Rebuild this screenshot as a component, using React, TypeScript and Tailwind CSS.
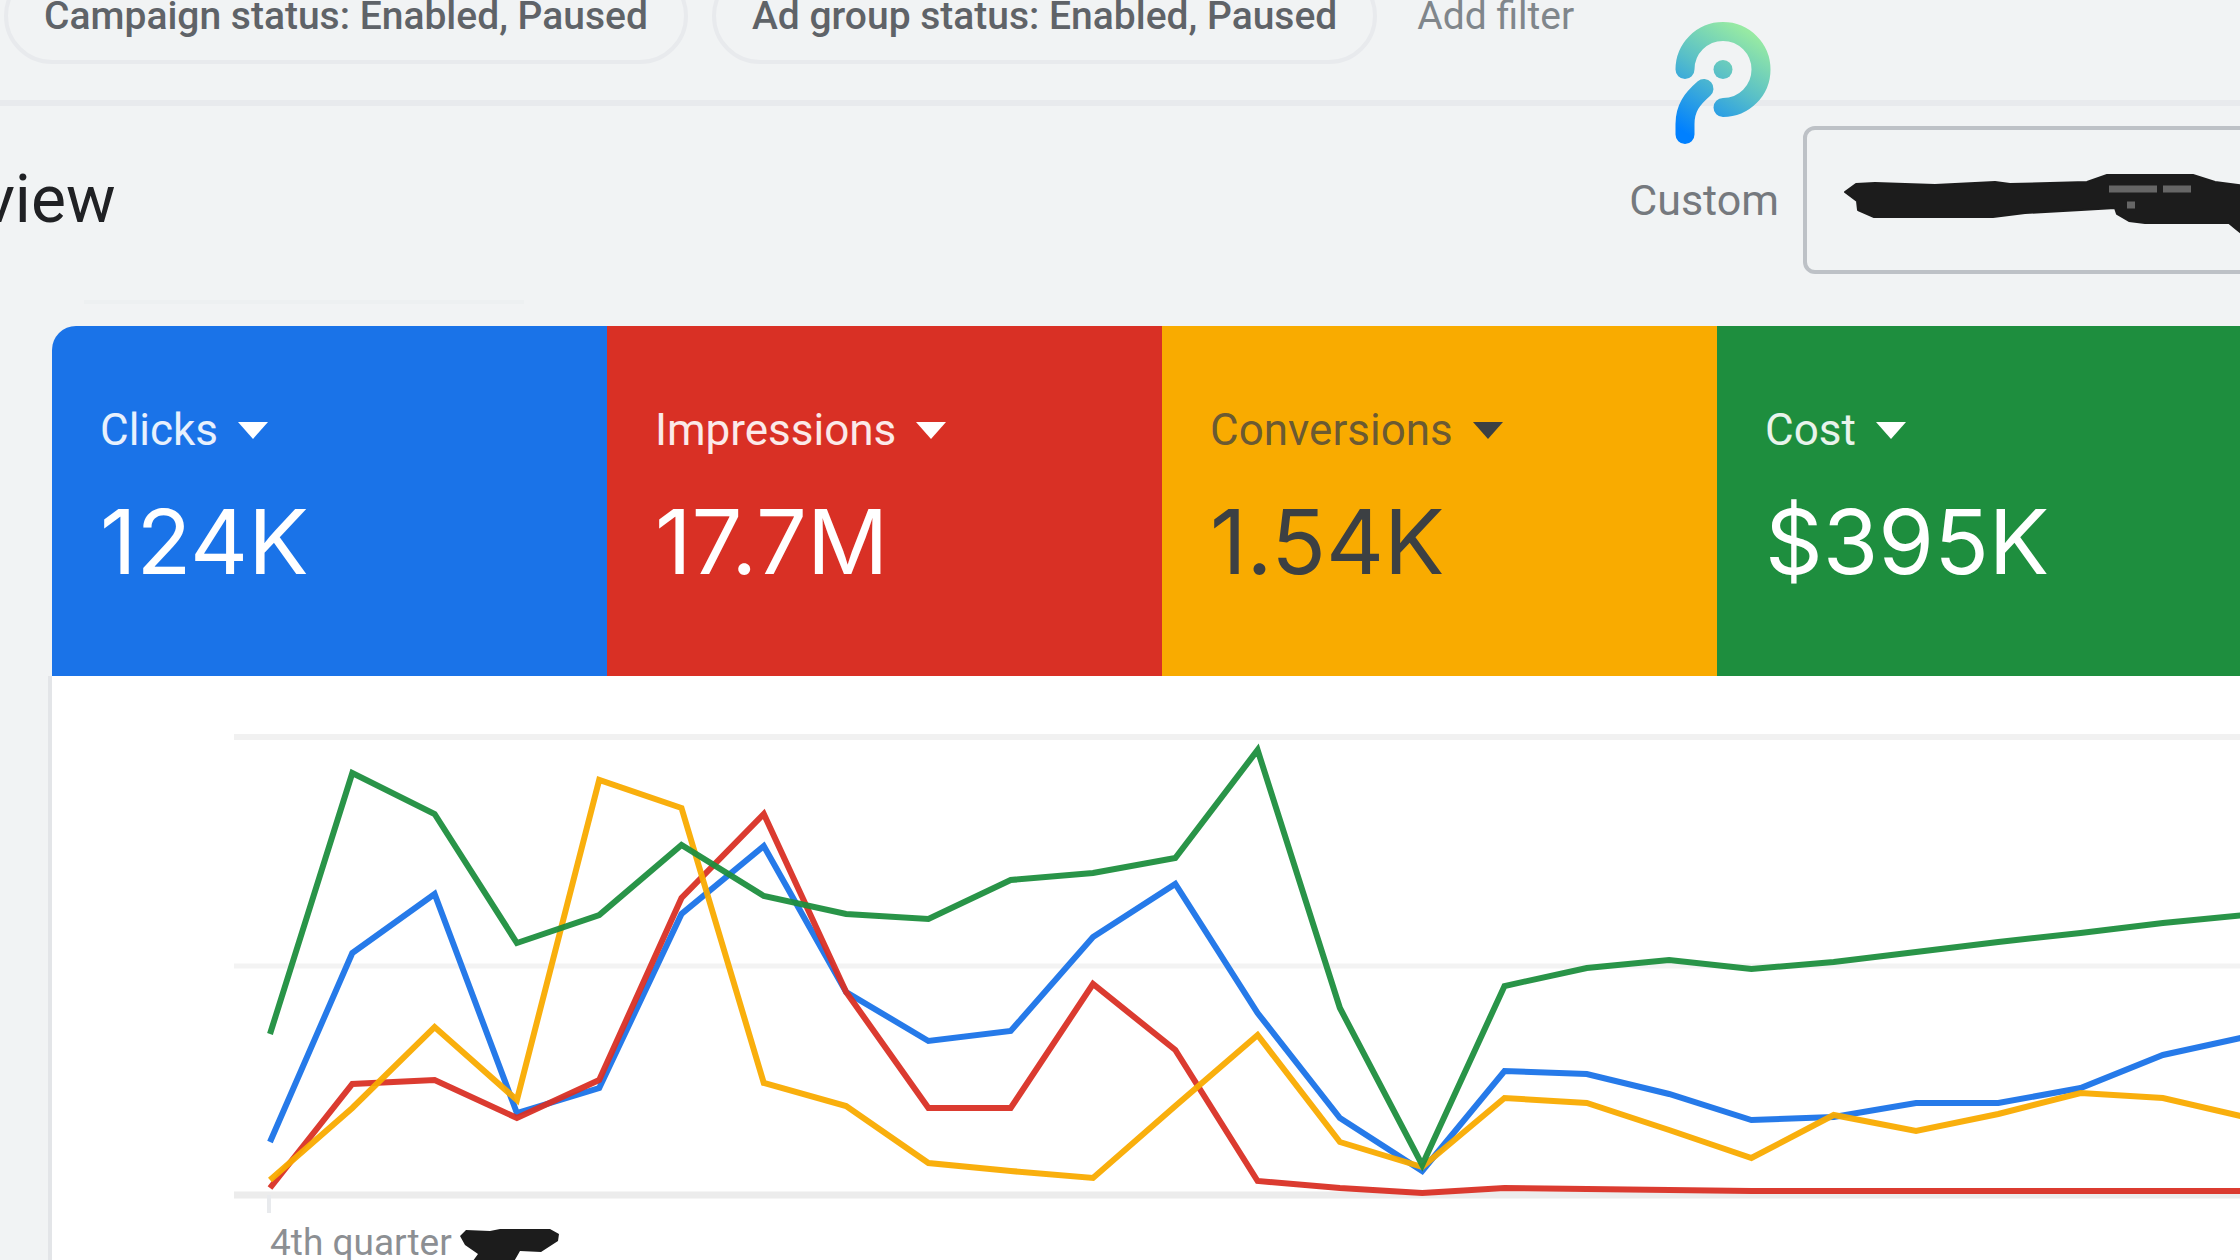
import clsx from 'clsx';

interface Metric {
  label: string;
  value: string;
  tile: string;
  labelColor: string;
}

interface Series {
  name: string;
  color: string;
  values: number[];
}

const FILTERS = ['Campaign status: Enabled, Paused', 'Ad group status: Enabled, Paused'];

const METRICS: Metric[] = [
  { label: 'Clicks', value: '124K', tile: 'bg-[#1a73e8] text-white rounded-tl-3xl', labelColor: 'text-white/90' },
  { label: 'Impressions', value: '17.7M', tile: 'bg-[#d93025] text-white', labelColor: 'text-white/90' },
  { label: 'Conversions', value: '1.54K', tile: 'bg-[#f9ab00] text-[#3c4043]', labelColor: 'text-[#3c4043]/75' },
  { label: 'Cost', value: '$395K', tile: 'bg-[#1e8e3e] text-white', labelColor: 'text-white/90' },
];

// y positions inside the chart's viewBox, one per week
const SERIES: Series[] = [
  {
    name: 'Clicks',
    color: '#1a73e8',
    values: [466, 277, 218, 437, 412, 238, 170, 316, 365, 355, 261, 208, 337, 442, 495, 395, 398, 418, 444, 441, 427, 427, 412, 379, 361],
  },
  {
    name: 'Impressions',
    color: '#d93025',
    values: [512, 408, 404, 442, 404, 222, 138, 316, 432, 432, 308, 374, 505, 512, 517, 512, 513, 514, 515, 515, 515, 515, 515, 515, 515],
  },
  {
    name: 'Conversions',
    color: '#f9ab00',
    values: [504, 432, 351, 424, 104, 132, 407, 430, 487, 495, 502, 430, 359, 466, 491, 422, 427, 454, 482, 439, 455, 438, 417, 422, 441],
  },
  {
    name: 'Cost',
    color: '#1e8e3e',
    values: [358, 97, 138, 267, 239, 169, 220, 238, 243, 204, 197, 182, 74, 332, 489, 310, 292, 284, 293, 286, 276, 266, 257, 247, 239],
  },
];

const START_X = 218;
const STEP_X = 82.3;

const toPoints = (values: number[]) => values.map((y, i) => `${START_X + i * STEP_X},${y}`).join(' ');

function BrandMark() {
  return (
    <svg viewBox="0 0 96 123" className="w-24" fill="none" aria-hidden="true">
      <defs>
        <linearGradient id="brand" gradientUnits="userSpaceOnUse" x1="74" y1="10" x2="12" y2="112">
          <stop offset="0" stopColor="#97eaa3" />
          <stop offset="0.45" stopColor="#58bfc8" />
          <stop offset="1" stopColor="#0080ff" />
        </linearGradient>
      </defs>
      <g stroke="url(#brand)" strokeWidth="19" strokeLinecap="round">
        <path d="M10 47.5A38 38 0 1 1 48 85.5" />
        <path d="M29 66.5C17 77 10 86 10 102V112.5" />
      </g>
      <circle cx="48" cy="47.5" r="9.5" fill="url(#brand)" />
    </svg>
  );
}

function FilterBar() {
  return (
    <div className="-mt-8 flex items-center border-b-6 border-[#e8eaed] pb-9 pl-1 whitespace-nowrap">
      {FILTERS.map((f) => (
        <button
          key={f}
          className="mr-6 h-24 rounded-full border-4 border-[#e8eaed] px-9 text-[39px] font-medium text-[#5f6368]"
        >
          {f}
        </button>
      ))}
      <button className="ml-4 text-[39px] text-[#80868b]">Add filter</button>
    </div>
  );
}

function TitleRow() {
  return (
    <div className="flex items-center justify-between pt-5">
      <h1 className="-ml-38 text-[66px] leading-[80px] text-[#202124]">Overview</h1>
      <div className="flex items-center gap-6">
        <label htmlFor="range" className="text-[43px] text-[#75797e]">
          Custom
        </label>
        <button id="range" className="-mr-8 h-[148px] w-[469px] rounded-xl border-4 border-[#bdc1c6] pl-9">
          {/* Dates are blacked out */}
          <svg viewBox="-2 -12 400 84" className="w-[400px]" aria-hidden="true">
            <path
              d="M0 22L11 14L30 13L90 15L150 12L165 14L242 12L262 5H348L370 12L400 16V66L390 58L384 53H300L284 51L272 44L270 38L236 40L180 43L148 47H29L13 40L12 31Z"
              fill="#1c1c1c"
              stroke="#1c1c1c"
              strokeWidth="2"
              strokeLinejoin="round"
            />
            <path d="M264 19H312M318 19H346M282 35H290" stroke="#666" strokeWidth="7" />
          </svg>
        </button>
      </div>
    </div>
  );
}

function MetricTile({ metric }: { metric: Metric }) {
  return (
    <button className={clsx('flex flex-1 flex-col items-start px-12 pt-20 pb-[82px] text-left', metric.tile)}>
      <span className="flex items-center gap-5">
        <span className={clsx('text-[44px] leading-[48px]', metric.labelColor)}>{metric.label}</span>
        <svg viewBox="0 0 30 17" className="w-[30px]" fill="currentColor" aria-hidden="true">
          <path d="M0 0H30L15 17Z" />
        </svg>
      </span>
      <span className="mt-9 font-[Inter,sans-serif] text-[90px] leading-[104px]">{metric.value}</span>
    </button>
  );
}

function TrendChart() {
  return (
    <div className="-ml-1 border-l-4 border-[#e3e5e8] bg-white">
      <svg viewBox="0 0 2220 545" className="w-full" fill="none" role="img" aria-label="Trend">
        <path d="M182 61H2220" stroke="#f1f1f1" strokeWidth="6" />
        <path d="M182 290H2220" stroke="#f3f3f3" strokeWidth="5" />
        <path d="M182 519H2220" stroke="#ececec" strokeWidth="7" />
        <path d="M217 519V537" stroke="#e8eaed" strokeWidth="4" />
        {SERIES.map((s) => (
          <polyline key={s.name} points={toPoints(s.values)} stroke={s.color} strokeWidth="6" strokeOpacity="0.95" />
        ))}
      </svg>
      <div className="flex pl-[218px]">
        <span className="text-[37px] leading-[44px] text-[#8c8f93]">4th quarter</span>
        <svg viewBox="0 0 100 44" className="ml-2 w-[100px]" fill="#1c1c1c" aria-hidden="true">
          <path d="M0 15L6 9L30 10L40 8H90L99 13L98 20L81 31L60 30L52 44H10L18 33L5 24Z" />
        </svg>
      </div>
    </div>
  );
}

export default function App() {
  return (
    <div className="relative h-screen overflow-hidden bg-[#f1f3f4] font-[Roboto,sans-serif]">
      <FilterBar />
      <TitleRow />
      <div className="mt-[26px] ml-21 h-1 w-[440px] bg-[#edf0f1]" />
      <main className="mt-[22px] -mr-8 ml-13">
        <div className="flex">
          {METRICS.map((m) => (
            <MetricTile key={m.label} metric={m} />
          ))}
        </div>
        <TrendChart />
      </main>

      {/* Floating brand mark, sits over the filter divider */}
      <div className="absolute top-[22px] right-[469px]">
        <BrandMark />
      </div>
    </div>
  );
}
